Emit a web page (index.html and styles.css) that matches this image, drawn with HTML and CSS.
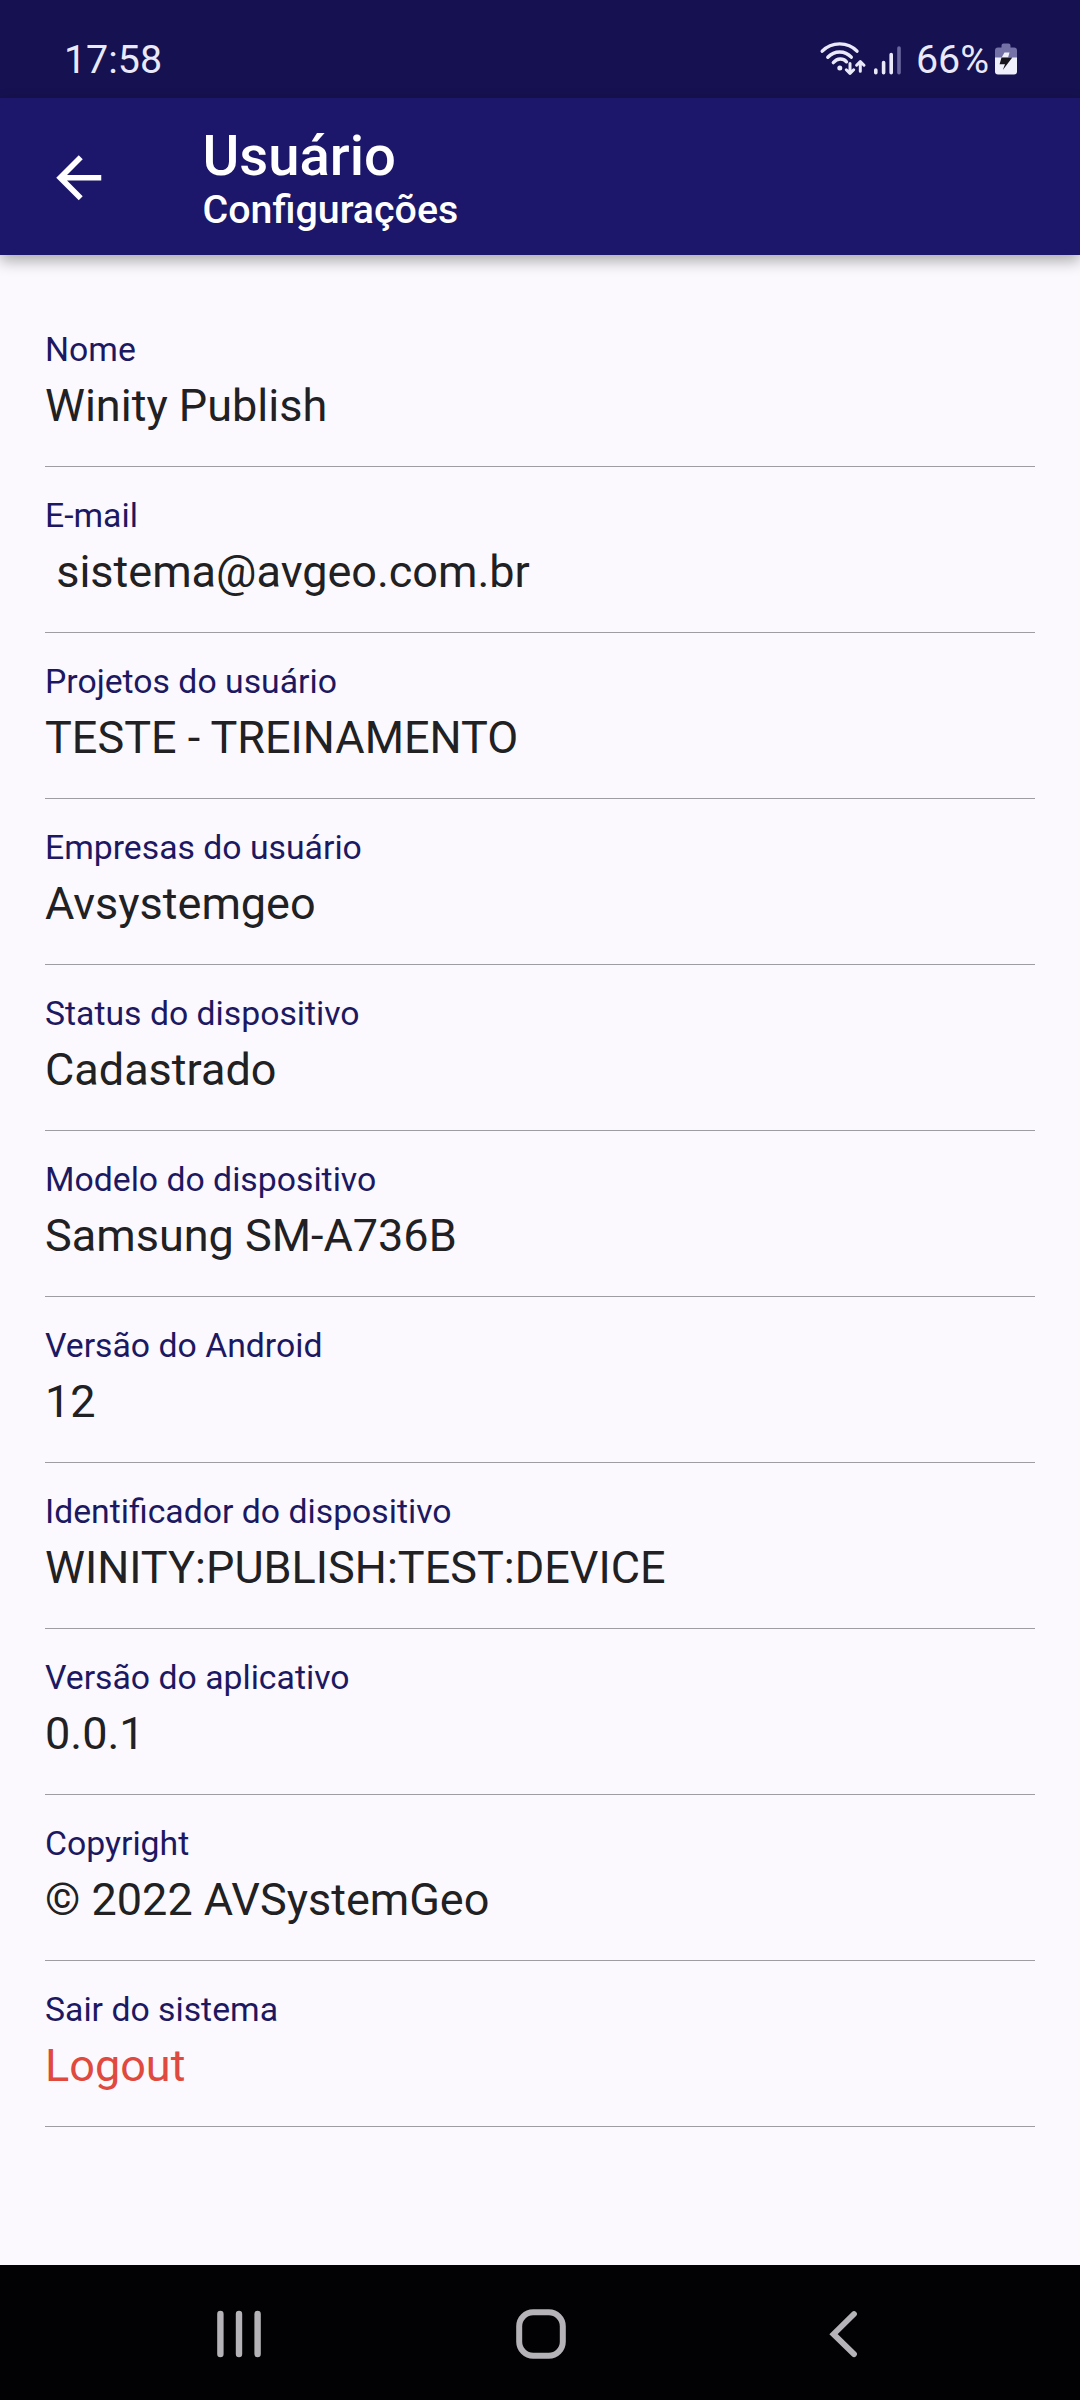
FILE: index.html
```html
<!DOCTYPE html>
<html lang="pt-BR">
<head>
<meta charset="utf-8">
<title>Usuário - Configurações</title>
<link rel="stylesheet" href="styles.css">
</head>
<body>
<div class="status-bar">
  <span class="clock">17:58</span>
  <div class="status-icons">
    <svg class="wifi" width="48" height="36" viewBox="0 0 48 36" fill="none" stroke="#e9e9fa" stroke-linecap="round">
      <path stroke-width="3.400" d="M3.200 11.200C12.500 1.400 29 1.400 38 11.200M8.800 17.200C15.500 10.200 26 10.200 32.300 17.200M14.300 22.600C18.500 18 24 18 27.500 21.800"/>
      <circle cx="20.800" cy="28" r="2.500" fill="#e9e9fa" stroke="none"/>
      <path stroke-width="3" stroke-linejoin="round" d="M31 23.500v9.800M27.300 29.800l3.700 3.700 3.700-3.700M41.300 31.300V21.500M37.600 25.200l3.700-3.700 3.700 3.700"/>
    </svg>
    <svg class="signal" width="30" height="34" viewBox="0 0 30 34" stroke="#e9e9fa" stroke-width="3.600" stroke-linecap="round">
      <path d="M3.800 27v2.800M11.600 19.500v10.300M19.200 11.500v18.300"/>
      <path d="M27 5v24.800" stroke="#6a67a0"/>
    </svg>
    <span class="percent">66%</span>
    <svg class="battery" width="22" height="34" viewBox="0 0 22 34">
      <path d="M6.500 2.500a2 2 0 0 1 2-2h5a2 2 0 0 1 2 2V4.500H19a3 3 0 0 1 3 3V15H0V7.500a3 3 0 0 1 3-3h3.500z" fill="#7371a5"/>
      <path d="M0 14.500h22v14a3 3 0 0 1-3 3H3a3 3 0 0 1-3-3z" fill="#efeffb"/>
      <path d="M9.500 9.500H14.500L13 14.700H6.500z" fill="#efeffb"/>
      <path d="M6.500 14.500H17.300L7.800 27 10 21.200H4.600z" fill="#17141e"/>
    </svg>
  </div>
</div>
<header class="app-bar">
  <svg class="back-arrow" width="67.500" height="67.500" viewBox="0 0 24 24" fill="#fff"><path d="M20 11H7.830l5.590-5.590L12 4l-8 8 8 8 1.410-1.410L7.830 13H20v-2z"/></svg>
  <div class="titles">
    <h1 class="title">Usuário</h1>
    <div class="subtitle">Configurações</div>
  </div>
</header>
<main class="content">
  <dl class="fields">
    <div class="field"><dt class="label">Nome</dt><dd class="value">Winity Publish</dd></div>
    <div class="field"><dt class="label">E-mail</dt><dd class="value"> sistema@avgeo.com.br</dd></div>
    <div class="field"><dt class="label">Projetos do usuário</dt><dd class="value">TESTE - TREINAMENTO</dd></div>
    <div class="field"><dt class="label">Empresas do usuário</dt><dd class="value">Avsystemgeo</dd></div>
    <div class="field"><dt class="label">Status do dispositivo</dt><dd class="value">Cadastrado</dd></div>
    <div class="field"><dt class="label">Modelo do dispositivo</dt><dd class="value">Samsung SM-A736B</dd></div>
    <div class="field"><dt class="label">Versão do Android</dt><dd class="value">12</dd></div>
    <div class="field"><dt class="label">Identificador do dispositivo</dt><dd class="value">WINITY:PUBLISH:TEST:DEVICE</dd></div>
    <div class="field"><dt class="label">Versão do aplicativo</dt><dd class="value">0.0.1</dd></div>
    <div class="field"><dt class="label">Copyright</dt><dd class="value">© 2022 AVSystemGeo</dd></div>
    <div class="field"><dt class="label">Sair do sistema</dt><dd class="value logout">Logout</dd></div>
  </dl>
</main>
<nav class="nav-bar">
  <svg width="50" height="50" viewBox="0 0 50 50" stroke="#b5b3b7" stroke-width="6.400" stroke-linecap="round"><path d="M6.400 5v40M25 5v40M43.600 5v40"/></svg>
  <svg width="50" height="50" viewBox="0 0 50 50" fill="none" stroke="#b5b3b7" stroke-width="6"><rect x="3.200" y="3.200" width="43.600" height="43.600" rx="14"/></svg>
  <svg width="50" height="50" viewBox="0 0 50 50" fill="none" stroke="#b5b3b7" stroke-width="5.800" stroke-linecap="round"><path d="M36 5L15.500 25.200 36 45.200"/></svg>
</nav>
</body>
</html>
```
FILE: styles.css
```css
* { box-sizing: border-box; }

body {
  margin: 0;
  width: 1080px;
  height: 2400px;
  display: flex;
  flex-direction: column;
  overflow: hidden;
  background: #fbf9fd;
  font-family: Roboto, sans-serif;
}

.status-bar {
  height: 98px;
  flex: none;
  display: flex;
  justify-content: space-between;
  padding: 37px 63px 0 64px;
  background: #161150;
  color: #e9e9fa;
  font-size: 39.375px;
  line-height: 46px;
}

.status-icons { display: flex; }
.wifi { margin-top: 3px; }
.signal { margin: 6px 14px 0 5px; }
.percent { margin-right: 6px; }
.battery { margin-top: 6px; }

.app-bar {
  height: 157px;
  flex: none;
  display: flex;
  align-items: center;
  padding-left: 45px;
  background: #1c176a;
  color: #fff;
  box-shadow: 0 6px 14px rgba(0, 0, 0, 0.32);
}

.back-arrow { margin-top: 1.500px; }

.titles { margin-left: 90px; }

.title {
  margin: 0;
  font-size: 56.250px;
  font-weight: 500;
  line-height: 66px;
}

.subtitle {
  font-size: 39.375px;
  font-weight: 500;
  line-height: 42px;
}

.content {
  flex: 1;
  padding: 46.500px 45px 0;
}

.fields { margin: 0; }

.field {
  height: 165.938px;
  padding-top: 28.900px;
  border-bottom: 1px solid #9e9da1;
}

.label {
  color: #1d1862;
  font-size: 33.750px;
  line-height: 40px;
}

.value {
  margin: 9px 0 0;
  color: #212023;
  font-size: 45px;
  line-height: 54px;
  white-space: pre;
}

.logout { color: #e0493e; }

.nav-bar {
  height: 135px;
  flex: none;
  display: flex;
  align-items: center;
  justify-content: space-between;
  padding: 3px 212px 0 214px;
  background: #020103;
}
```
